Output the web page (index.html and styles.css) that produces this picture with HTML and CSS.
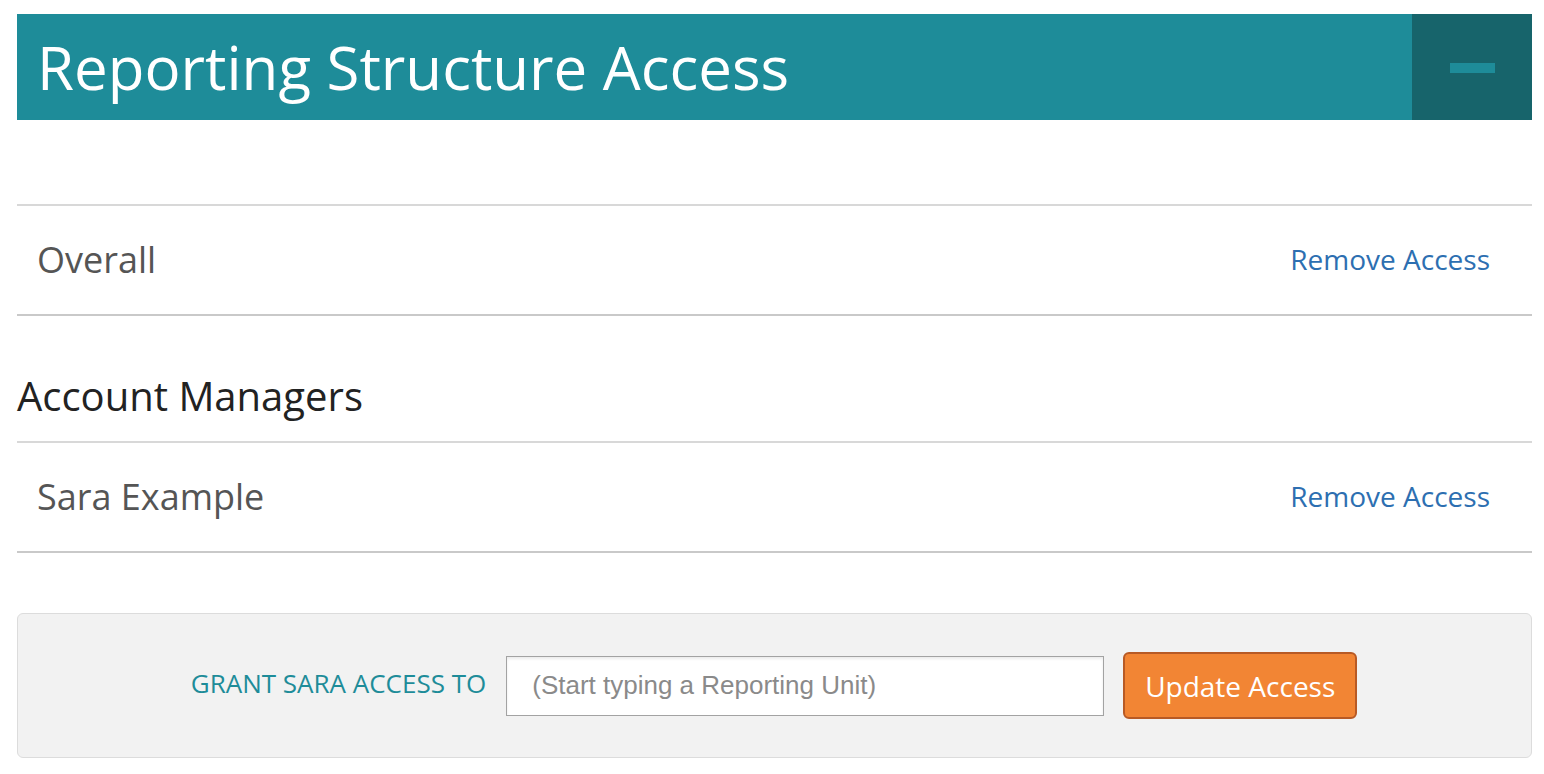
FILE: index.html
```html
<!DOCTYPE html>
<html lang="en">
<head>
    <meta charset="UTF-8">
    <meta name="viewport" content="width=device-width, initial-scale=1.0">
    <title>Reporting Structure Access</title>
    <link rel="stylesheet" href="styles.css">
</head>
<body>
    <div class="panel">
        <div class="panel-header">
            <h1>Reporting Structure Access</h1>
            <button class="collapse-btn" aria-label="Collapse"><span class="minus"></span></button>
        </div>

        <div class="access-list">
            <div class="access-row">
                <span class="unit-name">Overall</span>
                <a href="#" class="remove-link">Remove Access</a>
            </div>
        </div>

        <h2 class="group-title">Account Managers</h2>
        <div class="access-list">
            <div class="access-row">
                <span class="unit-name">Sara Example</span>
                <a href="#" class="remove-link">Remove Access</a>
            </div>
        </div>

        <div class="grant-box">
            <label for="unitInput" class="grant-label">GRANT SARA ACCESS TO</label>
            <input type="text" id="unitInput" placeholder="(Start typing a Reporting Unit)">
            <button class="update-btn">Update Access</button>
        </div>
    </div>
</body>
</html>
```

FILE: styles.css
```css
body {
    font-family: "Open Sans", Arial, sans-serif;
    background-color: white;
    margin: 0;
    padding: 0;
}
.panel {
    margin: 14px 12px 0 17px;
}
.panel-header {
    display: flex;
    align-items: stretch;
    height: 106px;
    background-color: #1e8c99;
}
.panel-header h1 {
    flex: 1;
    margin: 0;
    padding-left: 20px;
    display: flex;
    align-items: center;
    color: white;
    font-size: 60px;
    font-weight: 400;
}
.collapse-btn {
    width: 120px;
    border: none;
    background-color: #17646b;
    display: flex;
    align-items: center;
    justify-content: center;
    cursor: pointer;
    padding: 0;
}
.minus {
    display: block;
    width: 45px;
    height: 10px;
    margin-top: 2px;
    background-color: #1e8c99;
}
.access-list {
    border-top: 2px solid #d8d8d8;
}
.panel-header + .access-list {
    margin-top: 84px;
}
.access-row {
    display: flex;
    justify-content: space-between;
    align-items: center;
    height: 106px;
    padding: 0 42px 2px 20px;
    border-bottom: 2px solid #c9c9c9;
}
.unit-name {
    font-size: 36px;
    color: #555;
}
.remove-link {
    font-size: 28px;
    color: #2d6fb1;
    text-decoration: none;
}
.group-title {
    margin: 52px 0 0;
    height: 73px;
    font-size: 40px;
    font-weight: 400;
    line-height: 56px;
    color: #222;
}
.grant-box {
    margin-top: 60px;
    height: 143px;
    display: flex;
    align-items: center;
    justify-content: center;
    gap: 19px;
    padding-right: 1px;
    background-color: #f2f2f2;
    border: 1px solid #dcdcdc;
    border-radius: 6px;
}
.grant-label {
    font-size: 26px;
    margin-right: 1px;
    padding-bottom: 6px;
    color: #1e8c99;
}
.grant-box input[type="text"] {
    width: 559px;
    height: 58px;
    padding: 0 12px 0 25px;
    font-family: "Liberation Sans", Arial, sans-serif;
    font-size: 26px;
    border: 1px solid #a3a3a3;
    box-shadow: inset 0 2px 3px rgba(0, 0, 0, 0.08);
    background: white;
    box-sizing: content-box;
}
.grant-box input::placeholder {
    color: #8a8a8a;
}
.update-btn {
    width: 234px;
    height: 67px;
    font-family: "Open Sans", Arial, sans-serif;
    font-size: 28px;
    color: white;
    background-color: #f28534;
    border: 2px solid #b85a25;
    border-radius: 6px;
    cursor: pointer;
}
```
